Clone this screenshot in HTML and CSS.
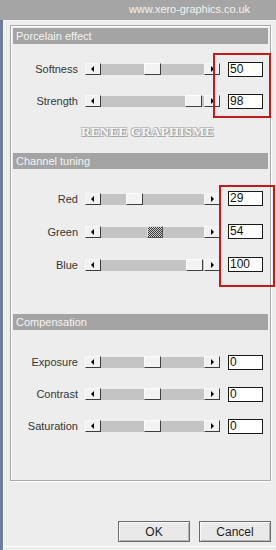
FILE: index.html
```html
<!DOCTYPE html>
<html>
<head>
<meta charset="utf-8">
<link rel="stylesheet" href="styles.css">
</head>
<body>
<div class="topbar"><span class="site">www.xero-graphics.co.uk</span></div>
<div class="window">
  <div class="strip"></div>
  <div class="main">
    <div class="group">
      <div class="header">Porcelain effect</div>
      <div class="rows first1">
        <div class="row">
          <span class="label">Softness</span>
          <div class="slider"><span class="btn left"><i></i></span><span class="track"><span class="thumb" style="left:43px"></span></span><span class="btn right"><i></i></span></div>
          <span class="input">50</span>
        </div>
        <div class="row">
          <span class="label">Strength</span>
          <div class="slider"><span class="btn left"><i></i></span><span class="track"><span class="thumb" style="left:84px"></span></span><span class="btn right"><i></i></span></div>
          <span class="input">98</span>
        </div>
      </div>
      <div class="mark">RENEE GRAPHISME</div>
      <div class="header h2">Channel tuning</div>
      <div class="rows first2">
        <div class="row tall">
          <span class="label">Red</span>
          <div class="slider"><span class="btn left"><i></i></span><span class="track"><span class="thumb" style="left:25px"></span></span><span class="btn right"><i></i></span></div>
          <span class="input">29</span>
        </div>
        <div class="row tall">
          <span class="label">Green</span>
          <div class="slider"><span class="btn left"><i></i></span><span class="track"><span class="thumb focus" style="left:46px"></span></span><span class="btn right"><i></i></span></div>
          <span class="input">54</span>
        </div>
        <div class="row tall">
          <span class="label">Blue</span>
          <div class="slider"><span class="btn left"><i></i></span><span class="track"><span class="thumb" style="left:85px"></span></span><span class="btn right"><i></i></span></div>
          <span class="input">100</span>
        </div>
      </div>
      <div class="header h3">Compensation</div>
      <div class="rows first3">
        <div class="row">
          <span class="label">Exposure</span>
          <div class="slider"><span class="btn left"><i></i></span><span class="track"><span class="thumb" style="left:43px"></span></span><span class="btn right"><i></i></span></div>
          <span class="input">0</span>
        </div>
        <div class="row">
          <span class="label">Contrast</span>
          <div class="slider"><span class="btn left"><i></i></span><span class="track"><span class="thumb" style="left:43px"></span></span><span class="btn right"><i></i></span></div>
          <span class="input">0</span>
        </div>
        <div class="row">
          <span class="label">Saturation</span>
          <div class="slider"><span class="btn left"><i></i></span><span class="track"><span class="thumb" style="left:43px"></span></span><span class="btn right"><i></i></span></div>
          <span class="input">0</span>
        </div>
      </div>
    </div>
    <div class="buttons">
      <span class="pbtn">OK</span>
      <span class="pbtn">Cancel</span>
    </div>
    <div class="bottomline"></div>
  </div>
</div>
<div class="redbox box1"></div>
<div class="redbox box2"></div>
</body>
</html>
```

FILE: styles.css
```css
html, body {
  margin: 0;
  padding: 0;
}
body {
  width: 276px;
  height: 550px;
  overflow: hidden;
  background: #ededed;
  font-family: "Liberation Sans", Arial, sans-serif;
  position: relative;
}
.topbar {
  height: 20px;
  background: #a5a5a5;
  display: flex;
  justify-content: flex-end;
  align-items: center;
  padding-right: 26px;
}
.site {
  color: #f2f2f2;
  font-size: 11px;
  letter-spacing: -0.05px;
  line-height: 14px;
  margin-top: -2px;
}
.window {
  display: flex;
  height: 530px;
}
.strip {
  width: 3px;
  background: #6f7e9c;
  flex: none;
}
.main {
  flex: 1;
  border-left: 1px solid #fafafa;
  border-top: 1px solid #f6f6f6;
  display: flex;
  flex-direction: column;
}
.group {
  margin-top: 4px;
  margin-left: 6px;
  width: 261px;
  height: 456px;
  box-sizing: border-box;
  border: 1px solid #a9a9a9;
  box-shadow: inset 1px 1px #ffffff, 1px 1px #ffffff;
  display: flex;
  flex-direction: column;
}
.header {
  margin: 2px 2px 0 2px;
  height: 16px;
  line-height: 16px;
  background: #a4a4a4;
  color: #f3f3f3;
  font-size: 11px;
  padding-left: 3px;
}
.h2 { margin-top: 6px; }
.h3 { margin-top: 33px; }
.rows { display: flex; flex-direction: column; }
.first1 { margin-top: 9px; }
.first2 { margin-top: 13px; }
.first3 { margin-top: 16px; }
.row {
  height: 32px;
  display: flex;
  align-items: center;
}
.row.tall { height: 33px; }
.label {
  width: 67px;
  text-align: right;
  font-size: 11px;
  color: #363636;
  flex: none;
}
.slider {
  margin-left: 7px;
  width: 135px;
  height: 12px;
  display: flex;
  flex: none;
}
.btn {
  width: 16px;
  height: 12px;
  box-sizing: border-box;
  background: #f1f1f1;
  border-top: 1px solid #f8f8f8;
  border-left: 1px solid #f8f8f8;
  border-right: 1px solid #3c3c3c;
  border-bottom: 1px solid #3c3c3c;
  display: flex;
  align-items: center;
  justify-content: center;
  flex: none;
}
.btn i {
  display: block;
  width: 0;
  height: 0;
  border-top: 3px solid transparent;
  border-bottom: 3px solid transparent;
}
.btn.left i { border-right: 3px solid #000; margin-right: 1px; }
.btn.right i { border-left: 3px solid #000; margin-left: 1px; }
.track {
  flex: 1;
  position: relative;
  background: #c4c4c4;
  margin-top: 1px;
  height: 11px;
}
.thumb {
  position: absolute;
  top: -1px;
  width: 17px;
  height: 12px;
  box-sizing: border-box;
  background: #f3f3f3;
  border-left: 1px solid #fdfdfd;
  border-top: 1px solid #fdfdfd;
  border-right: 1px solid #404040;
  border-bottom: 1px solid #404040;
}
.thumb.focus {
  background: repeating-conic-gradient(#2e2e2e 0 25%, #d8d8d8 0 50%) 0 0 / 2px 2px;
  border-color: #555;
  border-left-color: #ddd;
  border-top-color: #ddd;
  width: 16px;
}
.input {
  margin-left: 8px;
  width: 35px;
  height: 15px;
  box-sizing: border-box;
  background: #fff;
  border: 1px solid #1a1a1a;
  font-size: 12px;
  line-height: 13px;
  padding-left: 1px;
  color: #111;
  flex: none;
}
.mark {
  height: 30px;
  line-height: 30px;
  text-align: center;
  font-family: "Liberation Serif", "Times New Roman", serif;
  font-weight: bold;
  font-size: 13px;
  letter-spacing: 0.3px;
  color: #f6f6f6;
  padding-left: 14px;
  text-shadow: 1px 1px 0 #a0a0a0, -1px -1px 0 #c0c0c0, 1px -1px 0 #b8b8b8, -1px 1px 0 #b8b8b8;
}
.buttons {
  margin-top: 40px;
  display: flex;
  justify-content: flex-end;
  gap: 9px;
  padding-right: 5px;
}
.pbtn {
  width: 72px;
  height: 21px;
  box-sizing: border-box;
  border: 1px solid #6a6a6a;
  box-shadow: inset 1px 1px #fbfbfb, inset -1px -1px #b5b5b5;
  background: #e9e9e9;
  font-size: 12px;
  color: #1e1e1e;
  display: flex;
  align-items: center;
  justify-content: center;
}
.bottomline {
  margin-top: 4px;
  height: 1px;
  background: #fcfcfc;
}
.redbox {
  position: absolute;
  border: 2px solid #c41a1c;
  box-sizing: border-box;
}
.box1 {
  left: 213px;
  top: 53px;
  width: 58px;
  height: 65px;
}
.box2 {
  left: 219px;
  top: 185px;
  width: 56px;
  height: 102px;
}
```
